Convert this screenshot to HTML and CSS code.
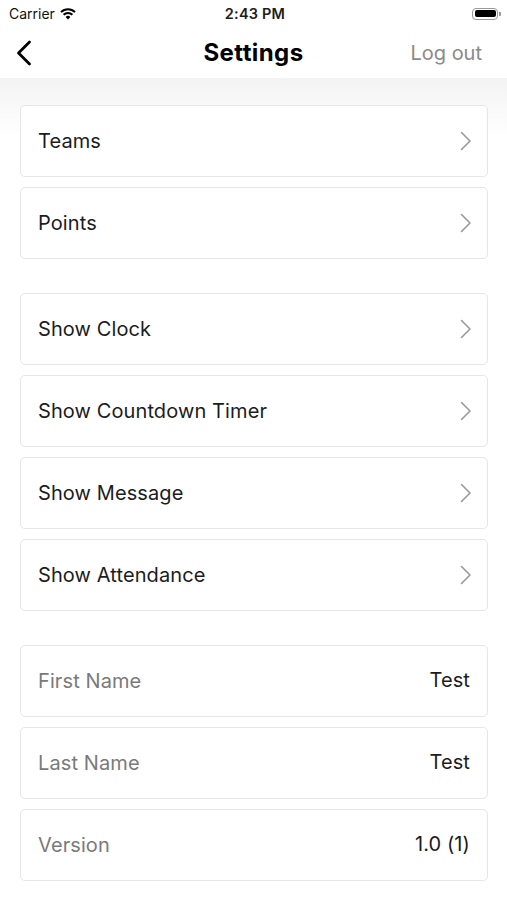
FILE: index.html
```html
<!DOCTYPE html>
<html lang="en">
<head>
    <meta charset="UTF-8">
    <meta name="viewport" content="width=device-width, initial-scale=1.0">
    <title>Settings</title>
    <link rel="stylesheet" href="styles.css">
</head>
<body>
    <div class="status-bar">
        <div class="carrier">
            Carrier
            <svg class="wifi" width="18" height="12" viewBox="0 0 18 12">
                <path d="M9 11.5 L6.6 8.9 A3.6 3.6 0 0 1 11.4 8.9 Z" fill="#000"/>
                <path d="M4.6 6.8 A6.3 6.3 0 0 1 13.4 6.8" stroke="#000" stroke-width="2" fill="none"/>
                <path d="M2 4.1 A10 10 0 0 1 16 4.1" stroke="#000" stroke-width="2" fill="none"/>
            </svg>
        </div>
        <div class="time">2:43 PM</div>
        <div class="battery">
            <span class="battery-body"><span class="battery-level"></span></span>
            <span class="battery-nub"></span>
        </div>
    </div>

    <div class="nav-bar">
        <div class="nav-left">
            <svg width="16" height="26" viewBox="0 0 16 26">
                <polyline points="13.5,2 2.5,13 13.5,24" stroke="#000" stroke-width="2.8" fill="none" stroke-linecap="round" stroke-linejoin="round"/>
            </svg>
        </div>
        <h1 class="nav-title">Settings</h1>
        <div class="nav-right">Log out</div>
    </div>

    <div class="content">
        <div class="group">
            <div class="row">
                <span class="row-label">Teams</span>
                <svg class="chevron" width="12" height="20" viewBox="0 0 12 20"><polyline points="1.5,1.5 10,10 1.5,18.5"/></svg>
            </div>
            <div class="row">
                <span class="row-label">Points</span>
                <svg class="chevron" width="12" height="20" viewBox="0 0 12 20"><polyline points="1.5,1.5 10,10 1.5,18.5"/></svg>
            </div>
        </div>

        <div class="group">
            <div class="row">
                <span class="row-label">Show Clock</span>
                <svg class="chevron" width="12" height="20" viewBox="0 0 12 20"><polyline points="1.5,1.5 10,10 1.5,18.5"/></svg>
            </div>
            <div class="row">
                <span class="row-label">Show Countdown Timer</span>
                <svg class="chevron" width="12" height="20" viewBox="0 0 12 20"><polyline points="1.5,1.5 10,10 1.5,18.5"/></svg>
            </div>
            <div class="row">
                <span class="row-label">Show Message</span>
                <svg class="chevron" width="12" height="20" viewBox="0 0 12 20"><polyline points="1.5,1.5 10,10 1.5,18.5"/></svg>
            </div>
            <div class="row">
                <span class="row-label">Show Attendance</span>
                <svg class="chevron" width="12" height="20" viewBox="0 0 12 20"><polyline points="1.5,1.5 10,10 1.5,18.5"/></svg>
            </div>
        </div>

        <div class="group">
            <div class="row info">
                <span class="row-label">First Name</span>
                <span class="row-value">Test</span>
            </div>
            <div class="row info">
                <span class="row-label">Last Name</span>
                <span class="row-value">Test</span>
            </div>
            <div class="row info">
                <span class="row-label">Version</span>
                <span class="row-value">1.0 (1)</span>
            </div>
        </div>
    </div>
</body>
</html>
```

FILE: styles.css
```css
body {
    margin: 0;
    font-family: Inter, "Liberation Sans", sans-serif;
    background-color: #fff;
    color: #1c1c1c;
}
.status-bar {
    height: 27px;
    display: grid;
    grid-template-columns: 1fr auto 1fr;
    align-items: center;
    padding: 0 6px 0 9px;
    font-size: 14px;
}
.carrier {
    display: flex;
    align-items: center;
    gap: 4px;
    color: #111;
}
.time {
    font-weight: 600;
    font-size: 14.5px;
    letter-spacing: 0.2px;
}
.battery {
    justify-self: end;
    display: flex;
    align-items: center;
    gap: 1px;
}
.battery-body {
    width: 26px;
    height: 12px;
    box-sizing: border-box;
    border: 1px solid #999;
    border-radius: 4px;
    padding: 1.5px;
    display: flex;
}
.battery-level {
    flex: 1;
    background: #000;
    border-radius: 2px;
}
.battery-nub {
    width: 2px;
    height: 4px;
    background: #999;
    border-radius: 0 1px 1px 0;
}
.nav-bar {
    height: 51px;
    display: grid;
    grid-template-columns: 1fr auto 1fr;
    align-items: center;
    padding: 0 16px;
}
.nav-left {
    display: flex;
    align-items: center;
}
.nav-title {
    margin: 0;
    font-size: 24px;
    font-weight: 700;
    letter-spacing: 0.4px;
    color: #000;
}
.nav-right {
    justify-self: end;
    margin-right: 9px;
    font-size: 20px;
    color: #8a8a8a;
}
.content {
    background: linear-gradient(#f3f3f3, #fff 60px);
    padding: 27px 19px 20px 20px;
}
.group {
    display: flex;
    flex-direction: column;
    gap: 10px;
    margin-bottom: 34px;
}
.row {
    height: 72px;
    box-sizing: border-box;
    border: 1px solid #e6e6e6;
    border-radius: 5px;
    background: #fff;
    display: flex;
    align-items: center;
    justify-content: space-between;
    padding: 0 15px 0 17px;
    font-size: 20px;
    letter-spacing: 0.1px;
}
.row.info {
    padding-right: 17px;
}
.info .row-label {
    color: #7a7a7a;
}
.row-value {
    color: #1c1c1c;
    margin-top: -2px;
}
.chevron polyline {
    fill: none;
    stroke: #9a9a9a;
    stroke-width: 1.6;
    stroke-linecap: round;
    stroke-linejoin: round;
}
```
